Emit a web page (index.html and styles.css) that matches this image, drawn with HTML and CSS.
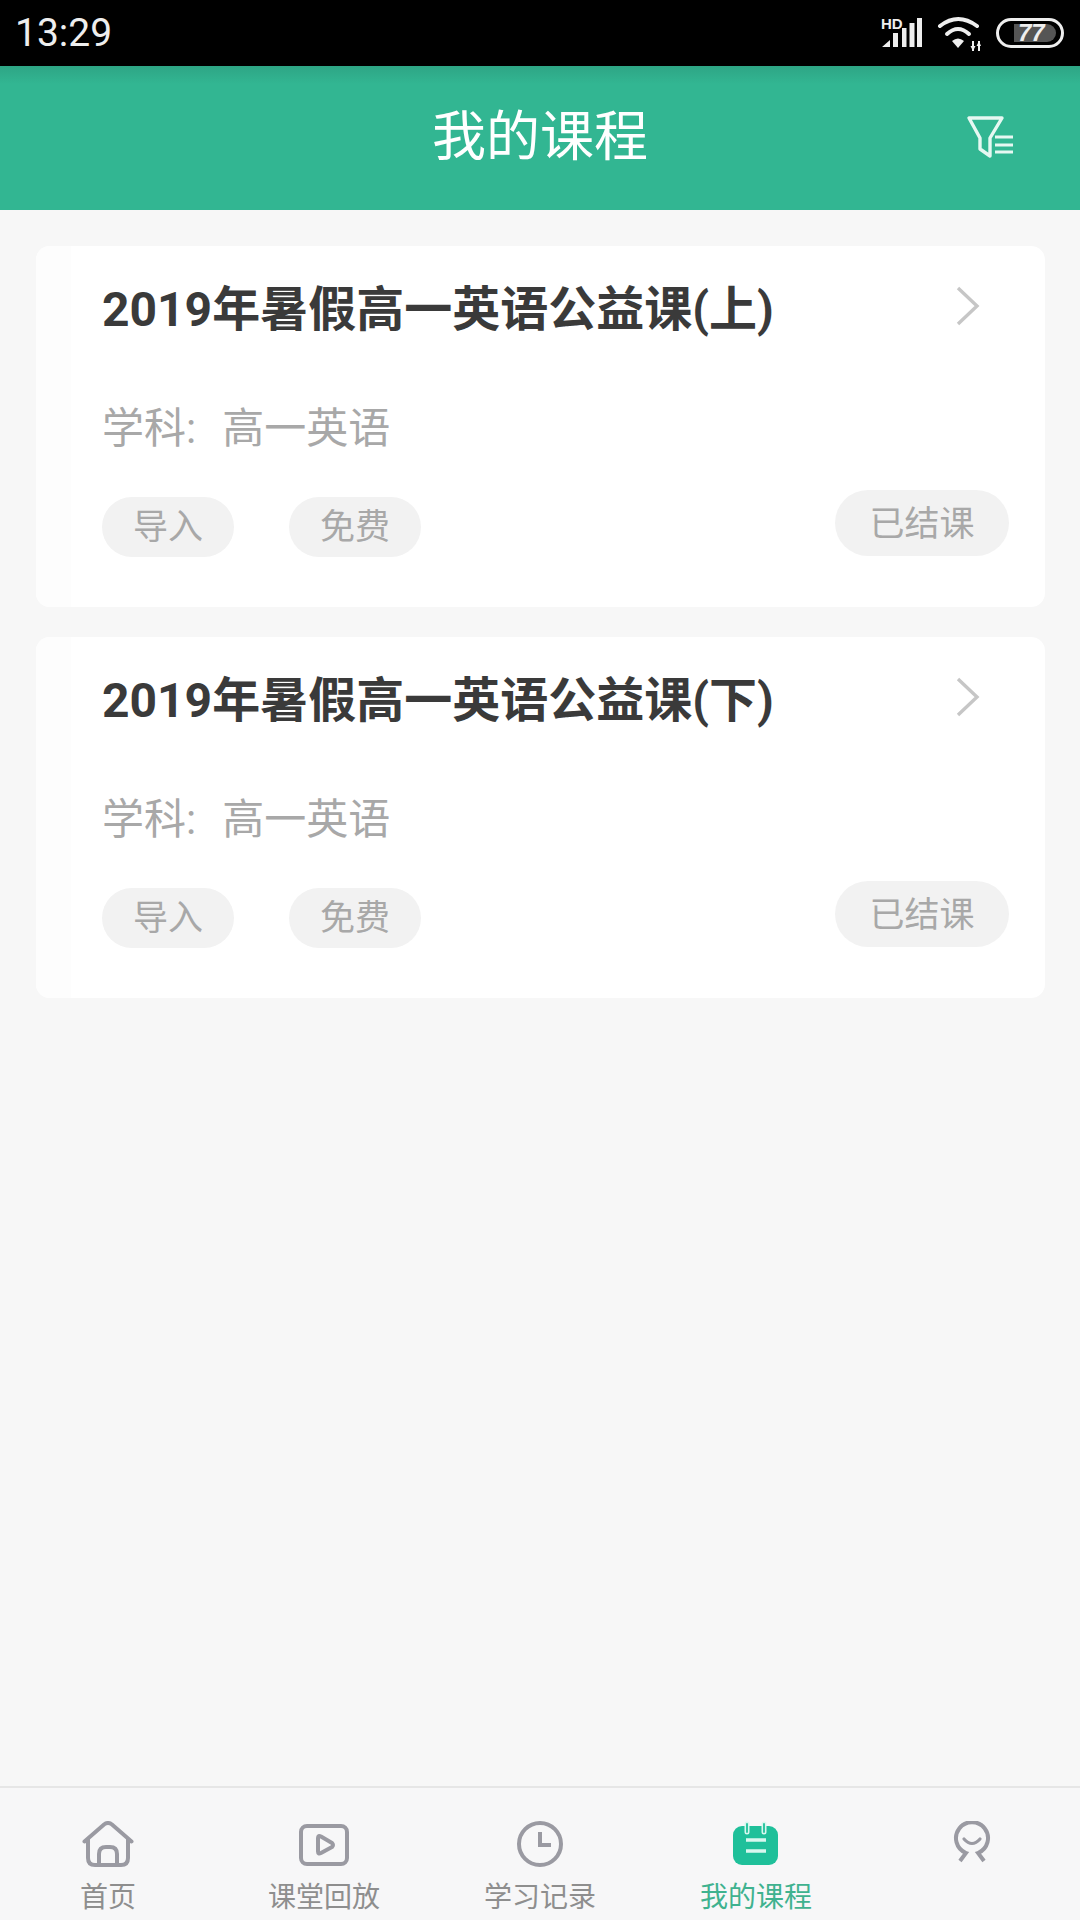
FILE: index.html
```html
<!DOCTYPE html>
<html lang="zh-CN">
<head>
<meta charset="utf-8">
<title>我的课程</title>
<link rel="stylesheet" href="styles.css">
</head>
<body>
<div class="app">
  <div class="status-bar">
    <span class="time">13:29</span>
    <div class="status-icons">
      <svg class="signal" width="44" height="34" viewBox="0 0 44 34">
        <text x="2" y="12.5" class="hd">HD</text>
        <path d="M3 31 L11 24 V31 Z M14 17 H19 V31 H14 Z M23 12 H27.5 V31 H23 Z M30.5 7 H35.5 V31 H30.5 Z M38 2 H43 V31 H38 Z" fill="#eee"/>
      </svg>
      <svg class="wifi" width="44" height="36" viewBox="0 0 44 36">
        <g fill="none" stroke="#eee" stroke-width="4" stroke-linecap="round">
          <path d="M3 11 Q21 -3 40 11"/>
          <path d="M10 19 Q21 9 32 19"/>
        </g>
        <path d="M15 26 Q21 21 27 26 L21 33 Z" fill="#eee"/>
        <path d="M36 26 V36 M42 26 V36" stroke="#eee" stroke-width="2" fill="none"/>
        <path d="M33.5 31 H38.5 L36 36 Z M39.5 31 H44 L42 26 Z" fill="#eee"/>
      </svg>
      <div class="battery"><span class="battery-level">77</span></div>
    </div>
  </div>

  <header class="app-header">
    <span></span>
    <h1 class="page-title">我的课程</h1>
    <svg class="filter-icon" width="50" height="50" viewBox="0 0 50 50">
      <path d="M3 5 H36 L24 25 V43 L14 36 V25 Z" fill="none" stroke="#e6f8f2" stroke-width="3.4" stroke-linejoin="round"/>
      <path d="M29 24 H47 M29 32 H47 M29 39 H47" stroke="#e6f8f2" stroke-width="3.2" fill="none"/>
    </svg>
  </header>

  <main class="course-list">
    <article class="card">
      <div class="card-stripe"></div>
      <div class="card-body">
        <div class="title-row">
          <h2 class="course-title">2019年暑假高一英语公益课(上)</h2>
          <svg class="chevron" width="24" height="40" viewBox="0 0 24 40"><path d="M2 2 L21 20 L2 38" fill="none" stroke="#c6c6c6" stroke-width="3.4"/></svg>
        </div>
        <p class="subject"><span class="subject-key">学科:</span><span>高一英语</span></p>
        <div class="meta-row">
          <div class="tags">
            <span class="tag">导入</span>
            <span class="tag">免费</span>
          </div>
          <span class="state">已结课</span>
        </div>
      </div>
    </article>
    <article class="card">
      <div class="card-stripe"></div>
      <div class="card-body">
        <div class="title-row">
          <h2 class="course-title">2019年暑假高一英语公益课(下)</h2>
          <svg class="chevron" width="24" height="40" viewBox="0 0 24 40"><path d="M2 2 L21 20 L2 38" fill="none" stroke="#c6c6c6" stroke-width="3.4"/></svg>
        </div>
        <p class="subject"><span class="subject-key">学科:</span><span>高一英语</span></p>
        <div class="meta-row">
          <div class="tags">
            <span class="tag">导入</span>
            <span class="tag">免费</span>
          </div>
          <span class="state">已结课</span>
        </div>
      </div>
    </article>
  </main>

  <nav class="tab-bar">
    <div class="tab">
      <svg class="tab-icon" width="52" height="46" viewBox="0 0 52 46">
        <path d="M2.5 20.5 L22 3.5 Q26 0.5 30 3.5 L49.5 20.5" fill="none" stroke="#9a9aa2" stroke-width="4" stroke-linecap="round"/>
        <path d="M6 18 V37 Q6 44 13 44 H39 Q46 44 46 37 V18" fill="none" stroke="#9a9aa2" stroke-width="4"/>
        <path d="M17 44 V33 Q17 26 24 26 H28 Q35 26 35 33 V44" fill="none" stroke="#9a9aa2" stroke-width="4"/>
      </svg>
      <span class="tab-label">首页</span>
    </div>
    <div class="tab">
      <svg class="tab-icon" width="52" height="46" viewBox="0 0 52 46">
        <rect x="3" y="5" width="46" height="38" rx="6" fill="none" stroke="#9a9aa2" stroke-width="4"/>
        <path d="M20 17 Q20 14 23 15.5 L34 22 Q36 24 34 26 L23 32 Q20 33.5 20 30.5 Z" fill="none" stroke="#9a9aa2" stroke-width="4" stroke-linejoin="round"/>
      </svg>
      <span class="tab-label">课堂回放</span>
    </div>
    <div class="tab">
      <svg class="tab-icon" width="52" height="46" viewBox="0 0 52 46">
        <circle cx="26" cy="23" r="21" fill="none" stroke="#9a9aa2" stroke-width="4"/>
        <path d="M26 11 V24 H37" fill="none" stroke="#9a9aa2" stroke-width="4"/>
      </svg>
      <span class="tab-label">学习记录</span>
    </div>
    <div class="tab">
      <svg class="tab-icon" width="52" height="46" viewBox="0 0 52 46">
        <rect x="3" y="5" width="45" height="39" rx="9" fill="#1fc09a"/>
        <path d="M17 3 V11 M34 3 V11" stroke="#d9f7ef" stroke-width="5" stroke-linecap="round"/>
        <path d="M17 3 V11 M34 3 V11" stroke="#1fc09a" stroke-width="1.8" stroke-linecap="round"/>
        <path d="M16 19 H36 M16 30 H36" stroke="#d9f7ef" stroke-width="3.4"/>
      </svg>
      <span class="tab-label tab-label-active">我的课程</span>
    </div>
    <div class="tab">
      <svg class="tab-icon" width="52" height="46" viewBox="0 0 52 46">
        <path d="M14 40 L20 32 A16 16 0 1 1 32 32 L38 40" fill="none" stroke="#9a9aa2" stroke-width="4"/>
        <path d="M18 18 Q26 27 34 18" fill="none" stroke="#9a9aa2" stroke-width="3.2" stroke-linecap="round"/>
      </svg>
    </div>
  </nav>
</div>
</body>
</html>
```

FILE: styles.css
```css
* { box-sizing: border-box; }

html, body {
  margin: 0;
  padding: 0;
}

body {
  font-family: Roboto, "Noto Sans CJK SC", sans-serif;
  background: #f7f7f7;
}

.app {
  width: 1080px;
  height: 1920px;
  display: flex;
  flex-direction: column;
  overflow: hidden;
}

/* status bar */
.status-bar {
  height: 66px;
  background: #000;
  display: flex;
  align-items: center;
  justify-content: space-between;
  padding: 0 16px 0 15px;
  flex: none;
}

.time {
  color: #eee;
  font-size: 39px;
  font-weight: 400;
  line-height: 66px;
}

.status-icons {
  display: flex;
  align-items: center;
}

.signal { margin-right: 14px; }
.wifi { margin-right: 15px; }

.hd {
  font-family: "Liberation Sans", sans-serif;
  font-weight: 700;
  font-size: 15px;
  fill: #eee;
}

.battery {
  width: 68px;
  height: 30px;
  border: 3px solid #eee;
  border-radius: 15px;
  padding: 3px 5px 3px 15px;
  display: flex;
}

.battery-level {
  flex: 1;
  background: #555;
  border-radius: 0 9px 9px 0;
  color: #eee;
  font-family: "Liberation Sans", sans-serif;
  font-size: 24px;
  font-weight: 700;
  font-style: italic;
  line-height: 18px;
  padding-left: 4px;
}

/* header */
.app-header {
  height: 144px;
  flex: none;
  display: grid;
  grid-template-columns: 1fr auto 1fr;
  align-items: center;
  padding: 0 64px;
  background: linear-gradient(#2ea585 0, #32b692 18px, #32b692 100%);
}

.page-title {
  margin: 0;
  color: #fff;
  font-size: 54px;
  font-weight: 400;
  line-height: 72px;
}

.filter-icon { justify-self: end; }

/* course list */
.course-list {
  flex: 1;
  padding: 36px 35px 0 36px;
  display: flex;
  flex-direction: column;
  gap: 30px;
}

.card {
  display: flex;
  background: #fff;
  border-radius: 14px;
  overflow: hidden;
}

.card-stripe {
  width: 35px;
  flex: none;
  background: #fdfdfd;
}

.card-body {
  flex: 1;
  padding: 32px 36px 50px 31px;
}

.title-row {
  display: flex;
  align-items: flex-start;
  justify-content: space-between;
  height: 64px;
}

.course-title {
  margin: 0;
  color: #3a3a3a;
  font-size: 48px;
  font-weight: 700;
  line-height: 64px;
}

.chevron { margin: 8px 29px 0 0; }

.subject {
  margin: 59px 0 0;
  color: #a8a8a8;
  font-size: 42px;
  line-height: 56px;
}

.subject-key { margin-right: 26px; }

.meta-row {
  display: flex;
  justify-content: space-between;
  align-items: flex-start;
  margin-top: 33px;
}

.tags {
  display: flex;
  gap: 55px;
  margin-top: 7px;
}

.tag {
  width: 132px;
  height: 60px;
  border-radius: 30px;
  background: #f2f2f2;
  color: #a8a8a8;
  font-size: 35px;
  line-height: 62px;
  text-align: center;
}

.state {
  width: 174px;
  height: 66px;
  border-radius: 33px;
  background: #f2f2f2;
  color: #a8a8a8;
  font-size: 35px;
  line-height: 70px;
  text-align: center;
}

/* tab bar */
.tab-bar {
  height: 134px;
  flex: none;
  border-top: 2px solid #e6e6e6;
  background: #f7f7f8;
  display: grid;
  grid-template-columns: repeat(5, 1fr);
  padding-top: 33px;
}

.tab {
  display: flex;
  flex-direction: column;
  align-items: center;
}

.tab-icon { display: block; }

.tab-label {
  margin-top: 13px;
  color: #8e8e8e;
  font-size: 28px;
  line-height: 36px;
}

.tab-label-active { color: #3fb28f; }
```
